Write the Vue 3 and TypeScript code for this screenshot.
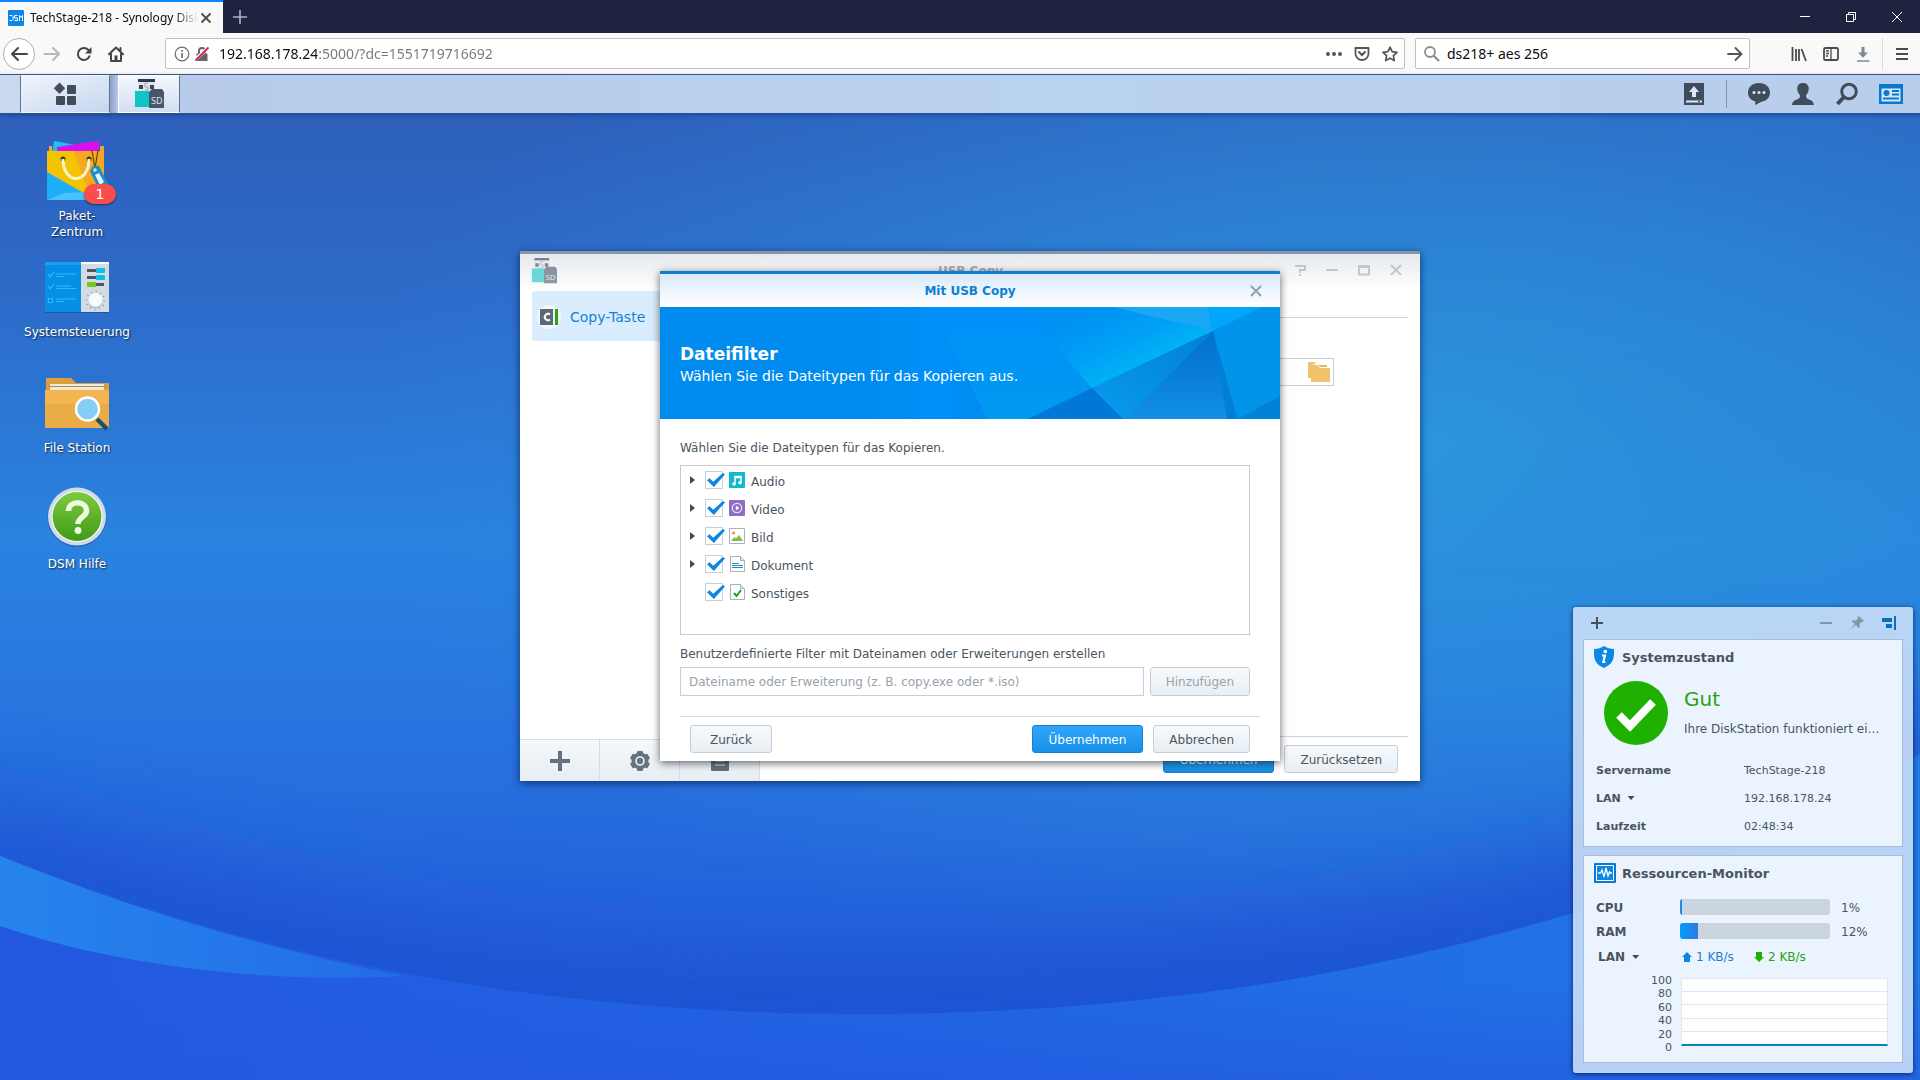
<script setup lang="ts">
import { ref } from 'vue'

interface FileType {
  id: string
  label: string
  expandable: boolean
  checked: boolean
}

interface Meter {
  label: string
  value: number
}

const url = ref('192.168.178.24:5000/?dc=1551719716692')
const query = ref('ds218+ aes 256')
const customFilter = ref('')

const shortcuts = [
  { id: 'package', label: 'Paket-Zentrum', lines: ['Paket-', 'Zentrum'] },
  { id: 'control', label: 'Systemsteuerung', lines: ['Systemsteuerung'] },
  { id: 'files', label: 'File Station', lines: ['File Station'] },
  { id: 'help', label: 'DSM Hilfe', lines: ['DSM Hilfe'] },
]

const fileTypes = ref<FileType[]>([
  { id: 'audio', label: 'Audio', expandable: true, checked: true },
  { id: 'video', label: 'Video', expandable: true, checked: true },
  { id: 'image', label: 'Bild', expandable: true, checked: true },
  { id: 'document', label: 'Dokument', expandable: true, checked: true },
  { id: 'other', label: 'Sonstiges', expandable: false, checked: true },
])

const meters: Meter[] = [
  { label: 'CPU', value: 1 },
  { label: 'RAM', value: 12 },
]

const scale = [100, 80, 60, 40, 20, 0]
const teeth = [0, 60, 120]
</script>

<template>
  <div class="screen">
    <header class="tabbar">
      <div class="tab">
        <svg class="favicon" viewBox="0 0 16 16" width="16" height="16">
          <rect width="16" height="16" rx="1" fill="#0a86e4" />
          <path d="M1.500 5.500h2.500l1 1v3l-1 1H1.500M9.500 5.500h-3v2.500h3v2.500h-3M11.500 11V5.500l1.500 2 1.500-2V11" fill="none" stroke="#fff" />
        </svg>
        <span class="tab-title">TechStage-218 - Synology DiskStation</span>
        <button class="plain" aria-label="Tab schließen">
          <svg width="12" height="12" viewBox="0 0 12 12"><path d="M1.500 1.500l9 9M10.500 1.500l-9 9" stroke="#4a4a4f" stroke-width="1.800" /></svg>
        </button>
      </div>
      <button class="plain new-tab" aria-label="Neuer Tab">
        <svg width="16" height="16" viewBox="0 0 16 16"><path d="M8 1v14M1 8h14" stroke="#b4b4bd" stroke-width="1.600" /></svg>
      </button>
      <div class="caption">
        <button class="plain" aria-label="Minimieren"><svg width="12" height="12" viewBox="0 0 12 12"><path d="M1 5.500h10" stroke="#fff" /></svg></button>
        <button class="plain" aria-label="Wiederherstellen"><svg width="12" height="12" viewBox="0 0 12 12"><path d="M1.500 3.500h7v7h-7zM3.500 3V1.500h7v7H9" fill="none" stroke="#fff" /></svg></button>
        <button class="plain" aria-label="Schließen"><svg width="12" height="12" viewBox="0 0 12 12"><path d="M1 1l10 10M11 1L1 11" stroke="#fff" /></svg></button>
      </div>
    </header>

    <nav class="toolbar">
      <div class="nav-buttons">
        <button class="plain back" aria-label="Zurück">
          <svg width="18" height="18" viewBox="0 0 18 18"><path d="M17 9H2M8 3L2 9l6 6" fill="none" stroke="#45454a" stroke-width="2" stroke-linecap="round" stroke-linejoin="round" /></svg>
        </button>
        <button class="plain" aria-label="Vor">
          <svg width="18" height="18" viewBox="0 0 18 18"><path d="M1.500 9H16M10 3l6 6-6 6" fill="none" stroke="#b8b8ba" stroke-width="2" stroke-linecap="round" stroke-linejoin="round" /></svg>
        </button>
        <button class="plain" aria-label="Neu laden">
          <svg width="16" height="16" viewBox="0 0 16 16"><path d="M13.500 10.200A6 6 0 1 1 12.200 3.800L13.500 5" fill="none" stroke="#45454a" stroke-width="2" stroke-linecap="round" /><path d="M15.500 1v6.500H9z" fill="#45454a" /></svg>
        </button>
        <button class="plain" aria-label="Startseite">
          <svg width="16" height="16" viewBox="0 0 16 16"><path d="M1 8.300L8 1.500l7 6.800M3 8v7h10V8M12.500 5V2" fill="none" stroke="#45454a" stroke-width="2" stroke-linecap="round" stroke-linejoin="round" /><path d="M6.500 9.500h3V15h-3z" fill="#45454a" /></svg>
        </button>
      </div>
      <div class="field address">
        <svg width="16" height="16" viewBox="0 0 16 16"><circle cx="8" cy="8" r="6.800" fill="none" stroke="#6a6a6e" stroke-width="1.200" /><path d="M8 7v5M8 4v1.700" stroke="#6a6a6e" stroke-width="1.600" /></svg>
        <svg width="16" height="16" viewBox="0 0 16 16"><path d="M2.500 7.500h11V15h-11z" fill="#66666a" /><path d="M5 8V5a3 3 0 0 1 6 0v3" fill="none" stroke="#66666a" stroke-width="2" /><path d="M1.500 13.500L14.500 1.500" stroke="#fff" stroke-width="3.400" /><path d="M1.500 14.500L14.500 1.500" stroke="#d7224a" stroke-width="1.800" /></svg>
        <input v-model="url" class="url" aria-label="Adresse" />
        <div class="field-tools">
          <button class="plain" aria-label="Seitenaktionen"><svg width="16" height="16" viewBox="0 0 16 16"><g fill="#55555a"><circle cx="2" cy="8" r="2" /><circle cx="8" cy="8" r="2" /><circle cx="14" cy="8" r="2" /></g></svg></button>
          <button class="plain" aria-label="In Pocket speichern"><svg width="16" height="16" viewBox="0 0 16 16"><path d="M1.500 2h13v5.500a6.500 6.500 0 0 1-13 0z" fill="none" stroke="#55555a" stroke-width="1.800" stroke-linejoin="round" /><path d="M5 6l3 3 3-3" fill="none" stroke="#55555a" stroke-width="2" stroke-linecap="round" /></svg></button>
          <button class="plain" aria-label="Lesezeichen"><svg width="16" height="16" viewBox="0 0 16 16"><path d="M8 1.200l2.100 4.500 4.900.6-3.600 3.400.9 4.900L8 12.200l-4.300 2.400.9-4.900L1 6.300l4.900-.6z" fill="none" stroke="#55555a" stroke-width="1.700" stroke-linejoin="round" /></svg></button>
        </div>
      </div>
      <div class="field search">
        <svg width="18" height="18" viewBox="0 0 18 18"><circle cx="7" cy="7" r="5" fill="none" stroke="#8c8c90" stroke-width="1.800" /><path d="M10.500 10.500L16 16" stroke="#8c8c90" stroke-width="2.200" /></svg>
        <input v-model="query" aria-label="Suchen" />
        <button class="plain" aria-label="Suche starten"><svg width="16" height="16" viewBox="0 0 16 16"><path d="M1 8h13M8.500 2L14.500 8l-6 6" fill="none" stroke="#55555a" stroke-width="1.800" stroke-linecap="round" stroke-linejoin="round" /></svg></button>
      </div>
      <div class="tools">
        <button class="plain" aria-label="Bibliothek"><svg width="16" height="16" viewBox="0 0 16 16"><path d="M1.500 1v14M5 3v12M8 3v12M10.500 3l4.500 12" fill="none" stroke="#4a4a4f" stroke-width="1.800" /></svg></button>
        <button class="plain" aria-label="Seitenleiste"><svg width="16" height="16" viewBox="0 0 16 16"><rect x="1" y="2" width="14" height="12" rx="1.500" fill="none" stroke="#4a4a4f" stroke-width="1.800" /><path d="M8 2v12M3 5h3M3 7.500h3M3 10h2" stroke="#4a4a4f" stroke-width="1.300" /></svg></button>
        <button class="plain" aria-label="Downloads"><svg width="16" height="16" viewBox="0 0 16 16"><path d="M6.500 1h3v5.500H13L8 11.700 3 6.500h3.500z" fill="#7a8a8e" /><path d="M2 15h12.500" stroke="#7a8a8e" stroke-width="1.500" /></svg></button>
      </div>
      <div class="menu">
        <button class="plain" aria-label="Menü"><svg width="14" height="16" viewBox="0 0 14 16"><path d="M1 3h12M1 8h12M1 13h12" stroke="#4a4a4f" stroke-width="2" /></svg></button>
      </div>
    </nav>

    <div class="taskbar">
      <div class="task-left"></div>
      <button class="plain task-menu" aria-label="Hauptmenü">
        <svg width="24" height="24" viewBox="0 0 24 24" fill="#434d59"><path d="M6.500.5l5.700 5.700-5.700 5.700L.8 6.200z" /><rect x="14" y="3" width="9" height="9" rx="1" /><rect x="3" y="14" width="9" height="9" rx="1" /><rect x="14" y="14" width="9" height="9" rx="1" /></svg>
      </button>
      <div class="task-gap"></div>
      <button class="plain task-app" aria-label="USB Copy">
        <svg width="30" height="30" viewBox="0 0 30 30"><path d="M4 0h17v3H4z" fill="#2f3a48" /><path d="M4 3h17v10H4z" fill="#dfe6ea" /><path d="M5 6h4v4H5zM16 6h4v4h-4z" fill="#37495a" /><path d="M14 4h-3v4h3v3h-3" fill="none" stroke="#9aa7b0" /><path d="M1 12h14v16H1z" fill="#10c3c4" /><path d="M18 10h10l2 3v16H15V13z" fill="#47566a" /><text x="17" y="25" font-size="9" font-family="Noto Sans, sans-serif" fill="#dde4ea">SD</text></svg>
      </button>
      <div class="task-right">
        <button class="plain" aria-label="Uploads"><svg width="24" height="24" viewBox="0 0 24 24"><path d="M2 1h20v22H2z" fill="#3f4c5a" /><path d="M12 4l5 6h-3v5h-4v-5H7z" fill="#dbe8f8" /><path d="M4 19.500h16" stroke="#dbe8f8" stroke-width="2" /><path d="M16 19.500h2" stroke="#3f4c5a" stroke-width="1" /></svg></button>
        <span class="task-sep"></span>
        <button class="plain" aria-label="Benachrichtigungen"><svg width="24" height="24" viewBox="0 0 24 24"><path d="M12 1c6.500 0 11 4 11 9.500 0 5-3.500 8.500-8.500 9.300L8 23l.5-3.500C4 18.500 1 15 1 10.500 1 5 5.500 1 12 1z" fill="#3f4c5a" /><g fill="#dbe8f8"><circle cx="7" cy="10.500" r="1.500" /><circle cx="12" cy="10.500" r="1.500" /><circle cx="17" cy="10.500" r="1.500" /></g></svg></button>
        <button class="plain" aria-label="Optionen"><svg width="24" height="24" viewBox="0 0 24 24"><path d="M12 1c4 0 6 2.500 5.700 6.500-.3 3-1.700 4.500-2.700 6 0 2 .5 3 3 4 3 1.200 4.500 2 5 5.500H1c.5-3.500 2-4.300 5-5.500 2.500-1 3-2 3-4-1-1.500-2.400-3-2.700-6C6 3.500 8 1 12 1z" fill="#3f4c5a" /></svg></button>
        <button class="plain" aria-label="Suche"><svg width="24" height="24" viewBox="0 0 24 24"><circle cx="14" cy="9.500" r="7.300" fill="none" stroke="#3f4c5a" stroke-width="3" /><path d="M8.500 15.500L2.500 22" stroke="#3f4c5a" stroke-width="4" /></svg></button>
        <button class="plain" aria-label="Widgets"><svg width="24" height="24" viewBox="0 0 24 24"><path d="M0 2h24v20H0z" fill="#0a78cc" /><path d="M2.500 6.500h19v13h-19z" fill="#d5e6fa" /><circle cx="7.500" cy="11" r="3" fill="#0a78cc" /><path d="M13 9h7M13 12.500h7M4 16.500h16" stroke="#0a78cc" stroke-width="1.800" /></svg></button>
      </div>
    </div>

    <main class="desktop">
      <svg class="wallpaper" viewBox="0 0 1920 966" preserveAspectRatio="none">
        <defs>
          <linearGradient id="sky" x1="0" y1="0" x2="0" y2="1">
            <stop offset="0" stop-color="#2e5fbb" />
            <stop offset="0.200" stop-color="#2d6cca" />
            <stop offset="0.440" stop-color="#2a83e0" />
            <stop offset="0.600" stop-color="#2877e0" />
            <stop offset="0.800" stop-color="#2565dc" />
            <stop offset="1" stop-color="#2258d8" />
          </linearGradient>
          <radialGradient id="glow" cx="0.740" cy="0.340" r="0.560">
            <stop offset="0" stop-color="#2b98de" stop-opacity="0.900" />
            <stop offset="0.450" stop-color="#2b90dc" stop-opacity="0.600" />
            <stop offset="1" stop-color="#2b84dc" stop-opacity="0" />
          </radialGradient>
          <linearGradient id="wedge" x1="0" y1="0" x2="1" y2="0">
            <stop offset="0" stop-color="#2784ec" />
            <stop offset="1" stop-color="#236ce6" />
          </linearGradient>
          <linearGradient id="floor" x1="0" y1="0" x2="1" y2="0">
            <stop offset="0" stop-color="#2358e0" />
            <stop offset="0.500" stop-color="#2166e4" />
            <stop offset="1" stop-color="#2278e6" />
          </linearGradient>
          <linearGradient id="floor-shade" x1="0" y1="0" x2="0" y2="1">
            <stop offset="0.700" stop-color="#2358e0" stop-opacity="0" />
            <stop offset="1" stop-color="#2358e0" stop-opacity="0.600" />
          </linearGradient>
          <filter id="soft" x="-10%" y="-60%" width="120%" height="220%">
            <feGaussianBlur stdDeviation="45" />
          </filter>
        </defs>
        <rect width="1920" height="966" fill="url(#sky)" />
        <rect width="1920" height="966" fill="url(#glow)" />
        <path d="M-60 730C260 846 540 900 860 900S1400 850 1573 799C1700 760 1820 700 1980 620" fill="none" stroke="#1f50d0" stroke-width="110" opacity="0.800" filter="url(#soft)" />
        <path d="M0 742C260 846 540 900 860 900S1400 850 1573 799C1700 760 1820 700 1920 640V966H0z" fill="url(#floor)" />
        <path d="M0 742C260 846 540 900 860 900S1400 850 1573 799C1700 760 1820 700 1920 640V966H0z" fill="url(#floor-shade)" />
        <path d="M0 742C130 794 260 834 404 862C260 870 110 850 0 812z" fill="url(#wedge)" />
        <path d="M1680 0C1640 180 1560 330 1440 460L1920 520V0z" fill="#2a86dc" opacity="0.080" />
      </svg>

      <ul class="shortcuts">
        <li v-for="item in shortcuts" :key="item.id">
          <a href="#" class="shortcut">
            <svg v-if="item.id === 'package'" width="80" height="64" viewBox="0 0 80 64">
              <path d="M17 2l22 4-3 8H15z" fill="#22c0ee" />
              <path d="M20 8l40-6q2 0 2 2v9H20z" fill="#d90ff0" />
              <path d="M12 7h3v5h48V7h4v53H12z" fill="#eda72c" />
              <path d="M10 12h57v49H10z" fill="#f4c400" />
              <path d="M36 12h31v49H55z" fill="#f6a81e" />
              <path d="M10 33l42 24 10 4H10z" fill="#1eaef8" />
              <path d="M28 54l20-1 14 8H10z" fill="#49c1fa" />
              <circle cx="26" cy="20" r="2.500" fill="#4a3a12" /><circle cx="52" cy="20" r="2.500" fill="#4a3a12" />
              <path d="M26 20c0 26 26 26 26 0" fill="none" stroke="#fdf2cf" stroke-width="3" />
              <path d="M55 11l3 19 3-19" fill="none" stroke="#5b4a1a" stroke-width="1.200" />
              <path d="M53 32l3-5 6 0 10 20-9 6z" fill="#168fd0" /><path d="M58 36l4-2 5 9-4 3z" fill="#e8f5fd" />
              <circle cx="58" cy="31" r="1.800" fill="#f0dc9a" />
            </svg>
            <svg v-else-if="item.id === 'control'" width="80" height="64" viewBox="0 0 80 64">
              <path d="M8 7h36v50H8z" fill="#068fe4" /><path d="M8 7h36v3H8z" fill="#12a4ee" />
              <path d="M44 7h28v50H44z" fill="#d3dce2" /><path d="M44 7h28v2H44z" fill="#fff" />
              <path d="M11 19l2 3 4-5M11 31l2 3 4-5M11.500 43.500h4v4h-4zM19 19h20M19 21.500h8M19 31h15M19 33.500h20M19 44h20M19 46.500h8" fill="none" stroke="#21c2fb" stroke-width="1.200" />
              <path d="M50 14h10v3H50zM50 21h10v3H50zM58 28h9v3h-9z" fill="#4d5962" />
              <rect x="59" y="13" width="9" height="5" rx="1" fill="#10bce8" /><rect x="59" y="20" width="9" height="5" rx="1" fill="#10bce8" /><rect x="50" y="27" width="9" height="5" rx="1" fill="#70cc1c" />
              <circle cx="58.500" cy="45.500" r="9" fill="none" stroke="#8b98a2" stroke-width="1.500" stroke-dasharray="1 3.700" /><circle cx="58.500" cy="46" r="7" fill="#9aa8b2" /><circle cx="58.500" cy="45" r="7" fill="#f6fbfd" />
              <path d="M8 57h64v1H8z" fill="#103f78" opacity="0.500" />
            </svg>
            <svg v-else-if="item.id === 'files'" width="80" height="64" viewBox="0 0 80 64">
              <path d="M9 8q0-1 1-1h24l5 5h32q1 0 1 1v14H9z" fill="#dc9f3b" />
              <path d="M13 13h54v6H13z" fill="#f0ead9" /><path d="M11 15.500h58" stroke="#b98a40" />
              <path d="M8 19h64v37q0 1-1 1H9q-1 0-1-1z" fill="#e9ac47" /><path d="M8 19h64v14H8z" fill="#f7b954" opacity="0.700" />
              <circle cx="50.500" cy="38" r="11.500" fill="#83cdf6" stroke="#fff" stroke-width="2.400" />
              <path d="M60 48l10 10" stroke="#1f4f68" stroke-width="4.500" />
            </svg>
            <svg v-else width="80" height="64" viewBox="0 0 80 64">
              <defs><linearGradient id="help" x1="0" y1="0" x2="0" y2="1"><stop offset="0" stop-color="#7ecb40" /><stop offset="1" stop-color="#3f9a16" /></linearGradient></defs>
              <circle cx="40" cy="30.500" r="29.500" fill="#1a3f80" opacity="0.400" />
              <circle cx="40" cy="29.500" r="29" fill="#cfdbe8" /><circle cx="40" cy="29.500" r="25" fill="url(#help)" stroke="#f3faee" stroke-width="1.200" />
              <path d="M31.500 24c0-11 18-11 18 0 0 6-8.500 6-8.500 13" fill="none" stroke="#eefbdc" stroke-width="5.500" />
              <circle cx="41" cy="43.500" r="3.400" fill="#eefbdc" />
            </svg>
            <span v-for="line in item.lines" :key="line" class="shortcut-line">{{ line }}</span>
            <span v-if="item.id === 'package'" class="badge">1</span>
          </a>
        </li>
      </ul>

      <section class="window" aria-label="USB Copy">
        <header class="win-title">
          <svg class="win-icon" width="26" height="26" viewBox="0 0 30 30"><path d="M4 0h17v3H4z" fill="#2f3a48" /><path d="M4 3h17v10H4z" fill="#dfe6ea" /><path d="M5 6h4v4H5zM16 6h4v4h-4z" fill="#37495a" /><path d="M14 4h-3v4h3v3h-3" fill="none" stroke="#9aa7b0" /><path d="M1 12h14v16H1z" fill="#10c3c4" /><path d="M18 10h10l2 3v16H15V13z" fill="#47566a" /><text x="17" y="25" font-size="9" font-family="Noto Sans, sans-serif" fill="#dde4ea">SD</text></svg>
          <h2>USB Copy</h2>
          <div class="win-controls">
            <button class="plain" aria-label="Hilfe"><svg width="12" height="12" viewBox="0 0 12 12"><path d="M1 2h10v4H6v3M6 10v2" fill="none" stroke="#c3c7cb" stroke-width="2" /></svg></button>
            <button class="plain" aria-label="Minimieren"><svg width="12" height="12" viewBox="0 0 12 12"><path d="M0 6h12" stroke="#c3c7cb" stroke-width="2" /></svg></button>
            <button class="plain" aria-label="Maximieren"><svg width="12" height="12" viewBox="0 0 12 12"><path d="M1 2h10v8.500H1zM1 3h10" fill="none" stroke="#c3c7cb" stroke-width="2" /></svg></button>
            <button class="plain" aria-label="Schließen"><svg width="12" height="12" viewBox="0 0 12 12"><path d="M1 1l10 10M11 1L1 11" stroke="#c3c7cb" stroke-width="2" /></svg></button>
          </div>
        </header>
        <div class="win-body">
          <aside class="side">
            <a href="#" class="side-item">
              <svg width="24" height="24" viewBox="0 0 24 24"><circle cx="12" cy="12" r="12" fill="#f2f7fc" /><path d="M4 4h12v16H4q-1 0-1-1V5q0-1 1-1z" fill="#5a6878" /><path d="M18 4h3v16h-3z" fill="#23a80e" /><path d="M13 9.500a3.200 3.200 0 1 0 0 5" fill="none" stroke="#fff" stroke-width="2" /></svg>
              <span>Copy-Taste</span>
            </a>
            <div class="side-tools">
              <button aria-label="Erstellen"><svg width="20" height="20" viewBox="0 0 20 20"><path d="M10 0v20M0 10h20" stroke="#66727e" stroke-width="4" /></svg></button>
              <button aria-label="Einstellungen"><svg width="20" height="20" viewBox="0 0 20 20"><circle cx="10" cy="10" r="8.500" fill="#66727e" /><rect v-for="t in teeth" :key="t" x="7" y="0" width="6" height="20" rx="1" fill="#66727e" :transform="`rotate(${t} 10 10)`" /><circle cx="10" cy="10" r="4" fill="#66727e" stroke="#eef3f8" stroke-width="1.600" /></svg></button>
              <button aria-label="Protokoll"><svg width="18" height="20" viewBox="0 0 18 20"><path d="M0 1h18v18q0 1-1 1H1q-1 0-1-1z" fill="#66727e" /><path d="M4 10h10M4 14h10" stroke="#eef3f8" /></svg></button>
            </div>
          </aside>
          <div class="win-main">
            <div class="rule"></div>
            <div class="picker">
              <input aria-label="Zielordner" readonly />
              <button class="plain" aria-label="Ordner wählen"><svg width="22" height="20" viewBox="0 0 22 20"><path d="M0 0h6l2 2h0l-5 1v13H0z" fill="#ecc26e" /><path d="M3 3h6l3 3h10v14H3z" fill="#f0c36c" /><path d="M10 3h9v2h-7z" fill="#e6b65d" /></svg></button>
            </div>
            <footer class="win-foot">
              <button class="btn primary">Übernehmen</button>
              <button class="btn">Zurücksetzen</button>
            </footer>
          </div>
        </div>
      </section>

      <section class="dialog" role="dialog" aria-label="Mit USB Copy">
        <header class="dlg-title">
          <h2>Mit USB Copy</h2>
          <button class="plain dlg-close" aria-label="Schließen"><svg width="12" height="12" viewBox="0 0 12 12"><path d="M1 1l10 10M11 1L1 11" stroke="#98a2ac" stroke-width="2" /></svg></button>
        </header>
        <div class="banner">
          <svg class="facets" viewBox="0 0 620 112" preserveAspectRatio="xMaxYMid slice">
            <defs>
              <linearGradient id="fa" gradientUnits="userSpaceOnUse" x1="440" y1="0" x2="475" y2="72"><stop offset="0" stop-color="#0092f3" /><stop offset="0.500" stop-color="#009ff5" /><stop offset="1" stop-color="#00b9f6" /></linearGradient>
              <linearGradient id="fb" x1="0" y1="0" x2="0" y2="1"><stop offset="0" stop-color="#006fcb" /><stop offset="1" stop-color="#128ee6" /></linearGradient>
              <linearGradient id="fc" x1="1" y1="0" x2="0" y2="1"><stop offset="0" stop-color="#007fd9" /><stop offset="1" stop-color="#0a9ceb" /></linearGradient>
              <linearGradient id="fd" x1="0" y1="0" x2="1" y2="0"><stop offset="0" stop-color="#008bee" /><stop offset="0.600" stop-color="#0090f8" /><stop offset="1" stop-color="#008cf0" /></linearGradient>
              <linearGradient id="fe" x1="0" y1="0" x2="0" y2="1"><stop offset="0" stop-color="#0090fb" /><stop offset="1" stop-color="#009aef" /></linearGradient>
            </defs>
            <path d="M0 0h620v112H0z" fill="#008bee" />
            <path d="M200 0h72l55 112H200z" fill="url(#fd)" />
            <path d="M272 0h88l72 81-64 31h-41z" fill="url(#fe)" />
            <path d="M360 0h93l100 24-121 57z" fill="url(#fa)" />
            <path d="M453 0h95l5 24z" fill="#1aa8f5" />
            <path d="M548 0h55l-50 24z" fill="#00a5fc" />
            <path d="M603 0h17v89l-67-65z" fill="#0093ea" />
            <path d="M553 24l67 65-42 23z" fill="#0095e9" />
            <path d="M620 89v23h-42z" fill="#0082d8" />
            <path d="M553 24l24 88H465z" fill="url(#fb)" />
            <path d="M553 24l24 88h-10z" fill="#007fd6" />
            <path d="M553 24L465 112h-2l-31-31z" fill="url(#fc)" />
            <path d="M432 81l31 31h-95z" fill="#0078d8" />
          </svg>
          <h3>Dateifilter</h3>
          <p>Wählen Sie die Dateitypen für das Kopieren aus.</p>
        </div>
        <div class="dlg-body">
          <p class="hint">Wählen Sie die Dateitypen für das Kopieren.</p>
          <ul class="tree">
            <li v-for="type in fileTypes" :key="type.id">
              <span class="arrow" :class="{ hidden: !type.expandable }"></span>
              <input :id="type.id" v-model="type.checked" type="checkbox" />
              <svg v-if="type.id === 'audio'" width="16" height="16" viewBox="0 0 16 16"><rect width="16" height="16" rx="1" fill="#0dbad0" /><path d="M6 12V4.500h6V11" fill="none" stroke="#fff" stroke-width="1.500" /><path d="M6 5.500h6" stroke="#fff" stroke-width="1.500" /><circle cx="5" cy="12" r="1.800" fill="#fff" /><circle cx="11" cy="10.800" r="1.800" fill="#fff" /></svg>
              <svg v-else-if="type.id === 'video'" width="16" height="16" viewBox="0 0 16 16"><rect width="16" height="16" rx="1" fill="#8d6cc4" /><circle cx="8" cy="8" r="4.700" fill="none" stroke="#e9e0f5" stroke-width="1.300" /><path d="M6.800 5.500L10.500 8l-3.700 2.500z" fill="#fff" /></svg>
              <svg v-else-if="type.id === 'image'" width="16" height="16" viewBox="0 0 16 16"><path d="M.5.500h15v15H.500z" fill="#fff" stroke="#a9b2ba" /><path d="M2 13l3.500-4 1.500 1.500L10 7l4 6z" fill="#86bb4b" /><circle cx="4.500" cy="5" r="1.600" fill="#f2913d" /></svg>
              <svg v-else-if="type.id === 'document'" width="16" height="16" viewBox="0 0 16 16"><path d="M1.500.500h10l4 4v11h-14z" fill="#fff" stroke="#a9b2ba" /><path d="M11.500.500v4h4" fill="#dfe4e8" stroke="#a9b2ba" /><path d="M3 7.500h7M3 9.500h11M3 11.500h11" stroke="#2a8ec4" /></svg>
              <svg v-else width="16" height="16" viewBox="0 0 16 16"><path d="M1.500.500h10l4 4v11h-14z" fill="#fff" stroke="#a9b2ba" /><path d="M11.500.500v4h4" fill="#dfe4e8" stroke="#a9b2ba" /><path d="M5 9l2.500 3 4.500-6" fill="none" stroke="#23a023" stroke-width="2" /></svg>
              <label :for="type.id">{{ type.label }}</label>
            </li>
          </ul>
          <label class="hint" for="filter">Benutzerdefinierte Filter mit Dateinamen oder Erweiterungen erstellen</label>
          <div class="add-row">
            <input id="filter" v-model="customFilter" placeholder="Dateiname oder Erweiterung (z. B. copy.exe oder *.iso)" />
            <button class="btn" disabled>Hinzufügen</button>
          </div>
        </div>
        <footer class="dlg-foot">
          <button class="btn">Zurück</button>
          <span class="spacer"></span>
          <button class="btn primary">Übernehmen</button>
          <button class="btn">Abbrechen</button>
        </footer>
      </section>

      <aside class="widgets">
        <div class="widget-bar">
          <button class="plain" aria-label="Hinzufügen"><svg width="12" height="12" viewBox="0 0 12 12"><path d="M6 0v12M0 6h12" stroke="#47525e" stroke-width="2" /></svg></button>
          <span class="spacer"></span>
          <button class="plain" aria-label="Minimieren"><svg width="12" height="12" viewBox="0 0 12 12"><path d="M0 6h12" stroke="#8496a8" stroke-width="2" /></svg></button>
          <button class="plain" aria-label="Anheften"><svg width="14" height="14" viewBox="0 0 14 14"><path d="M8.500 0L14 5l-1.300 1-1-.3L9.500 8l.2 3.200-1 1L5.500 9 0 14 4.500 8 1.700 5.200l1-1L6 4.400 8 2.200 7.500 1z" fill="#8496a8" /></svg></button>
          <button class="plain" aria-label="Andocken"><svg width="14" height="14" viewBox="0 0 14 14"><path d="M0 2h10v4H0zM4 8h6v4H4zM12 0h2v14h-2z" fill="#0a70bd" /></svg></button>
        </div>
        <section class="widget">
          <header>
            <svg width="22" height="22" viewBox="0 0 22 22"><path d="M10 0c3 2 6 3 10 3 .5 10-1 15-10 19C1 18-.5 13 0 3c4 0 7-1 10-3z" fill="#0b87e4" /><circle cx="11.300" cy="5.500" r="1.800" fill="#fff" /><path d="M8 9.500h3L9.300 16h2" fill="none" stroke="#fff" stroke-width="2.200" /></svg>
            <h3>Systemzustand</h3>
          </header>
          <div class="health">
            <svg width="64" height="64" viewBox="0 0 64 64"><circle cx="32" cy="32" r="32" fill="#1fb100" /><path d="M15 34l11 11 23-24" fill="none" stroke="#fff" stroke-width="8" /></svg>
            <div class="health-text">
              <strong>Gut</strong>
              <p>Ihre DiskStation funktioniert einwandfrei.</p>
            </div>
          </div>
          <table>
            <tbody>
              <tr><th scope="row">Servername</th><td>TechStage-218</td></tr>
              <tr><th scope="row">LAN <i class="caret"></i></th><td>192.168.178.24</td></tr>
              <tr><th scope="row">Laufzeit</th><td>02:48:34</td></tr>
            </tbody>
          </table>
        </section>
        <section class="widget">
          <header>
            <svg width="22" height="20" viewBox="0 0 22 20"><rect width="22" height="20" rx="1" fill="#0b79cf" /><path d="M2.500 2.500h17v15h-17z" fill="#0b87e4" stroke="#fff" /><path d="M4 10h2.500l1.500-3 2 7 2-9 2 8 1.500-4 1 1H18" fill="none" stroke="#fff" stroke-width="1.300" /></svg>
            <h3>Ressourcen-Monitor</h3>
          </header>
          <div class="meters">
            <div v-for="m in meters" :key="m.label" class="meter">
              <b>{{ m.label }}</b>
              <div class="track" role="progressbar" :aria-label="m.label" :aria-valuenow="m.value"><div class="fill" :style="{ width: m.value + '%' }"></div></div>
              <span>{{ m.value }}%</span>
            </div>
          </div>
          <div class="traffic">
            <b>LAN <i class="caret"></i></b>
            <span class="up"><svg width="10" height="10" viewBox="0 0 10 10"><path d="M5 0l5 5H8v5H2V5H0z" fill="#0b87e4" /></svg>1 KB/s</span>
            <span class="down"><svg width="10" height="10" viewBox="0 0 10 10"><path d="M5 10L0 5h2V0h6v5h2z" fill="#1fb100" /></svg>2 KB/s</span>
          </div>
          <div class="chart">
            <ol><li v-for="n in scale" :key="n">{{ n }}</li></ol>
            <div class="plot"><div v-for="n in 5" :key="n" class="band"></div></div>
          </div>
        </section>
      </aside>
    </main>
  </div>
</template>

<style>
body {
  margin: 0;
}
</style>

<style scoped>
* {
  box-sizing: border-box;
}
.screen {
  display: flex;
  flex-direction: column;
  min-height: 100vh;
  overflow: hidden;
  font-family: Verdana, "DejaVu Sans", sans-serif;
  font-size: 12px;
  line-height: 16px;
  color: #4a545e;
}
h2, h3, p, ul, ol {
  margin: 0;
  padding: 0;
  list-style: none;
}
svg {
  display: block;
  flex: none;
}
button, input {
  font: inherit;
  color: inherit;
}
.plain {
  display: flex;
  align-items: center;
  justify-content: center;
  padding: 0;
  border: 0;
  background: none;
}
.spacer {
  flex: 1;
}

/* Browser chrome */
.tabbar {
  display: flex;
  align-items: stretch;
  height: 33px;
  background: #20233f;
}
.tab {
  display: flex;
  align-items: center;
  gap: 6px;
  width: 223px;
  padding: 0 11px 0 8px;
  border-top: 2px solid #0a84ff;
  background: #f9f9fa;
  font-family: "Segoe UI", "Noto Sans", sans-serif;
  color: #0c0c0d;
}
.tab-title {
  flex: 1;
  margin-right: -4px;
  overflow: hidden;
  white-space: nowrap;
  mask-image: linear-gradient(90deg, #000 86%, transparent);
}
.new-tab {
  width: 34px;
}
.caption {
  display: flex;
  margin-left: auto;
}
.caption .plain {
  width: 46px;
}
.toolbar {
  display: flex;
  align-items: center;
  height: 42px;
  background: #f9f9fa;
  border-bottom: 1px solid #3a5f96;
  font-family: "Segoe UI", "Noto Sans", sans-serif;
  font-size: 14px;
  color: #0c0c0d;
}
.nav-buttons {
  display: flex;
  width: 165px;
  padding-left: 3px;
}
.nav-buttons .plain {
  width: 32px;
  height: 32px;
}
.nav-buttons .back {
  margin-right: 1px;
  border: 1px solid #b1b1b3;
  border-radius: 50%;
  background: #fff;
}
.field {
  display: flex;
  align-items: center;
  height: 31px;
  border: 1px solid #c0c0c2;
  border-radius: 2px;
  background: #fff;
}
.field input {
  flex: 1;
  min-width: 0;
  padding: 0;
  border: 0;
  outline: 0;
  background: none;
}
.address {
  flex: 1;
  gap: 4px;
  padding: 0 6px 0 8px;
}
.field .url {
  margin-left: 5px;
  background: linear-gradient(90deg, #0c0c0d 98px, #77777a 98px);
  background-clip: text;
  -webkit-text-fill-color: transparent;
}
.field-tools {
  display: flex;
  gap: 12px;
}
.search {
  width: 335px;
  margin-left: 10px;
  gap: 6px;
  padding: 0 6px 0 7px;
}
.tools {
  display: flex;
  gap: 16px;
  margin-left: 41px;
}
.menu {
  display: flex;
  align-items: center;
  height: 32px;
  margin-left: 11px;
  padding: 0 11px 0 12px;
  border-left: 1px solid #dcdcde;
}

/* DSM task bar */
.taskbar {
  display: flex;
  position: relative;
  height: 39px;
  background: linear-gradient(90deg, #b7c9ea, #b9d2ee 55%, #b8cdeb);
  border-bottom: 1px solid #27528f;
  box-shadow: 0 1px 4px rgba(10, 40, 100, 0.5);
  z-index: 1;
}
.task-left {
  width: 20px;
  background: #cbd9f0;
}
.task-menu {
  width: 90px;
  border: 1px solid #eef4fc;
  border-left: 1px solid #64758f;
  border-right: 1px solid #64758f;
  background: linear-gradient(160deg, #f0f5fc, #c6d5ee);
}
.task-gap {
  width: 8px;
  background: linear-gradient(90deg, #8b9fc4, #b7c9ea);
}
.task-app {
  width: 62px;
  border: 1px solid #fff;
  border-right: 1px solid #5c6f8c;
  background: linear-gradient(180deg, #f4f7fc, #d3def2);
}
.task-right {
  display: flex;
  align-items: center;
  gap: 20px;
  margin-left: auto;
  padding-right: 17px;
}
.task-sep {
  width: 1px;
  height: 28px;
  background: #8294ae;
}

/* Desktop */
.desktop {
  position: relative;
  flex: 1;
  min-height: 960px;
}
.wallpaper {
  position: absolute;
  inset: 0;
  width: 100%;
  height: 100%;
}
.shortcuts {
  position: relative;
  width: 154px;
  padding-top: 25px;
}
.shortcut {
  position: relative;
  display: flex;
  flex-direction: column;
  align-items: center;
  height: 116px;
  color: #fff;
  text-decoration: none;
  text-shadow: 1px 1px 2px rgba(0, 0, 0, 0.7);
}
.shortcut svg {
  margin-bottom: 5px;
}
.badge {
  position: absolute;
  top: 45px;
  left: 84px;
  width: 32px;
  height: 20px;
  border-radius: 10px;
  background: #fa4d4c;
  box-shadow: 0 1px 2px rgba(0, 0, 0, 0.5);
  font-size: 14px;
  line-height: 20px;
  text-align: center;
  text-shadow: none;
}

/* Buttons */
.btn {
  height: 28px;
  padding: 1px 15px 0;
  border: 1px solid #c4ced8;
  border-radius: 3px;
  background: linear-gradient(180deg, #f6fafd, #e9eef3);
  white-space: nowrap;
}
.btn:disabled {
  color: #97a2ad;
}
.btn.primary {
  padding: 1px 16px 0;
  border-color: #1b7fcb;
  background: linear-gradient(180deg, #30a5fc, #1790e6);
  color: #fff;
}

/* USB Copy window */
.window {
  position: absolute;
  top: 137px;
  left: 520px;
  display: flex;
  flex-direction: column;
  width: 900px;
  height: 530px;
  border-top: 3px solid #8796ab;
  background: #fff;
  box-shadow: 0 2px 8px rgba(0, 20, 70, 0.7);
}
.win-title {
  display: flex;
  align-items: flex-start;
  height: 37px;
  padding: 4px 18px 0 11px;
  background: linear-gradient(180deg, #e6e9ed, #fff);
}
.win-icon {
  opacity: 0.6;
}
.win-title h2 {
  flex: 1;
  padding: 5px 0 0 90px;
  font-size: 12px;
  text-align: center;
  color: #a0a9b2;
}
.win-controls {
  display: flex;
  gap: 20px;
  padding-top: 6px;
}
.win-body {
  display: flex;
  flex: 1;
}
.side {
  display: flex;
  flex-direction: column;
  justify-content: space-between;
  width: 240px;
}
.side-item {
  display: flex;
  align-items: center;
  gap: 9px;
  height: 50px;
  margin-left: 12px;
  padding: 1px 0 0 5px;
  border-radius: 3px;
  background: #d9edfe;
  color: #1482d4;
  font-size: 14px;
  text-decoration: none;
}
.side-tools {
  display: flex;
  height: 42px;
}
.side-tools button {
  display: flex;
  flex: 1;
  align-items: center;
  justify-content: center;
  border: 0;
  border-top: 1px solid #d3dce6;
  border-right: 1px solid #d3dce6;
  background: linear-gradient(180deg, #f5f9fd, #e8edf2);
}
.win-main {
  display: flex;
  flex: 1;
  flex-direction: column;
  padding: 26px 12px 8px 20px;
}
.rule {
  border-top: 1px solid #d0d2d5;
}
.picker {
  display: flex;
  align-items: center;
  width: 374px;
  height: 28px;
  margin: 40px 74px 0 auto;
  padding-right: 3px;
  border: 1px solid #c6d0da;
}
.picker input {
  flex: 1;
  border: 0;
  outline: 0;
}
.win-foot {
  display: flex;
  justify-content: flex-end;
  gap: 10px;
  margin-top: auto;
  padding: 8px 10px 0 0;
  border-top: 1px solid #d0d2d5;
}

/* Filter dialog */
.dialog {
  position: absolute;
  top: 157px;
  left: 660px;
  display: flex;
  flex-direction: column;
  width: 620px;
  height: 490px;
  border-top: 3px solid #0f80d2;
  background: #fff;
  box-shadow: 0 2px 8px rgba(0, 0, 0, 0.6);
}
.dlg-title {
  display: flex;
  align-items: center;
  height: 33px;
  padding: 0 18px;
  background: linear-gradient(180deg, #d9eafa, #fff);
}
.dlg-title h2 {
  flex: 1;
  padding-left: 12px;
  font-size: 12px;
  text-align: center;
  color: #0f7ed0;
}
.banner {
  position: relative;
  height: 112px;
  padding: 36px 20px 0;
  color: #fff;
}
.facets {
  position: absolute;
  inset: 0;
  width: 100%;
  height: 100%;
}
.banner h3, .banner p {
  position: relative;
}
.banner h3 {
  font-size: 17px;
  line-height: 22px;
}
.banner p {
  font-size: 14px;
  line-height: 22px;
}
.dlg-body {
  padding: 21px 30px 0 20px;
}
.hint {
  display: block;
}
.tree {
  height: 170px;
  margin: 9px 0 11px;
  border: 1px solid #c8ccd0;
}
.tree li {
  display: flex;
  align-items: center;
  height: 28px;
}
.arrow {
  width: 5px;
  height: 8px;
  margin: 0 10px 0 9px;
  background: #414b55;
  clip-path: polygon(0 0, 100% 50%, 0 100%);
}
.arrow.hidden {
  visibility: hidden;
}
.tree input {
  position: relative;
  width: 18px;
  height: 18px;
  margin: 0 6px 0 0;
  border: 1px solid #c6d0da;
  background: #fff;
  appearance: none;
}
.tree input:checked::before {
  position: absolute;
  top: 1px;
  left: 1px;
  width: 18px;
  height: 14px;
  background: #0d86e0;
  clip-path: polygon(0 52%, 14% 38%, 35% 62%, 88% 0, 100% 10%, 38% 100%);
  content: "";
}
.tree label {
  margin-left: 6px;
  padding-top: 3px;
}
.add-row {
  display: flex;
  gap: 6px;
  margin-top: 5px;
}
.add-row input {
  flex: 1;
  height: 29px;
  padding: 1px 8px 0;
  border: 1px solid #c6d0da;
}
.add-row input::placeholder {
  color: #97a2ad;
  opacity: 1;
}
.add-row .btn {
  height: 29px;
}
.dlg-foot {
  display: flex;
  gap: 10px;
  margin: auto 20px 0;
  padding: 8px 10px 8px;
  border-top: 1px solid #d8dadc;
}
.dlg-foot .btn:first-child {
  padding: 1px 19px 0;
}

/* Widget panel */
.widgets {
  position: absolute;
  right: 7px;
  bottom: 7px;
  display: flex;
  flex-direction: column;
  gap: 8px;
  width: 340px;
  padding: 0 10px 10px;
  border-radius: 3px;
  background: rgba(206, 225, 248, 0.87);
  box-shadow: 0 1px 5px rgba(0, 20, 80, 0.8);
}
.widget-bar {
  display: flex;
  align-items: center;
  gap: 18px;
  height: 24px;
  padding: 8px 7px 0 8px;
}
.widget {
  height: 208px;
  padding: 6px 14px 0 10px;
  border: 1px solid #a9bed5;
  background: #ebf4fe;
}
.widget header {
  display: flex;
  align-items: center;
  gap: 6px;
  height: 22px;
}
.widget h3 {
  padding-top: 2px;
  font-size: 13px;
}
.health {
  display: flex;
  gap: 16px;
  padding: 13px 0 14px 10px;
}
.health-text {
  min-width: 0;
  padding-right: 4px;
}
.health strong {
  display: block;
  font-size: 20px;
  font-weight: normal;
  line-height: 36px;
  color: #26a314;
}
.health p {
  overflow: hidden;
  line-height: 24px;
  text-overflow: ellipsis;
  white-space: nowrap;
}
table {
  width: 100%;
  border-spacing: 0;
  font-size: 11px;
}
th, td {
  height: 28px;
  padding: 0 0 4px 2px;
  text-align: left;
}
th {
  width: 148px;
}
.caret {
  display: inline-block;
  width: 7px;
  height: 4px;
  margin: 0 0 2px 3px;
  background: #414b55;
  clip-path: polygon(0 0, 100% 0, 50% 100%);
}
.meters {
  display: flex;
  flex-direction: column;
  gap: 8px;
  padding-top: 15px;
}
.meter {
  display: flex;
  align-items: center;
  height: 16px;
  padding-left: 2px;
}
.meter b, .traffic b {
  width: 84px;
}
.meter b, .meter span {
  padding-top: 2px;
}
.track {
  width: 150px;
  height: 16px;
  margin-right: 11px;
  border-radius: 3px;
  background: #cbd5df;
  overflow: hidden;
}
.fill {
  height: 100%;
  min-width: 2px;
  background: linear-gradient(90deg, #059ef8, #2e79df);
}
.traffic {
  display: flex;
  align-items: center;
  height: 20px;
  margin-top: 8px;
  padding-left: 4px;
}
.traffic span {
  display: flex;
  align-items: center;
  gap: 4px;
}
.up {
  width: 72px;
  color: #1b7fd0;
}
.down {
  color: #26a314;
}
.chart {
  display: flex;
  gap: 9px;
  margin-top: 5px;
}
.chart ol {
  display: flex;
  flex-direction: column;
  justify-content: space-between;
  width: 78px;
  height: 80px;
  margin-top: 2px;
  font-size: 11px;
  line-height: 13px;
  text-align: right;
}
.plot {
  display: flex;
  flex: 1;
  flex-direction: column;
  height: 68px;
  margin-top: 6px;
  border: 1px solid #dfe8f0;
  border-bottom: 2px solid #0c84b8;
  background: #fff;
}
.band {
  flex: 1;
}
.band + .band {
  border-top: 1px solid #dfe8f0;
}
</style>
